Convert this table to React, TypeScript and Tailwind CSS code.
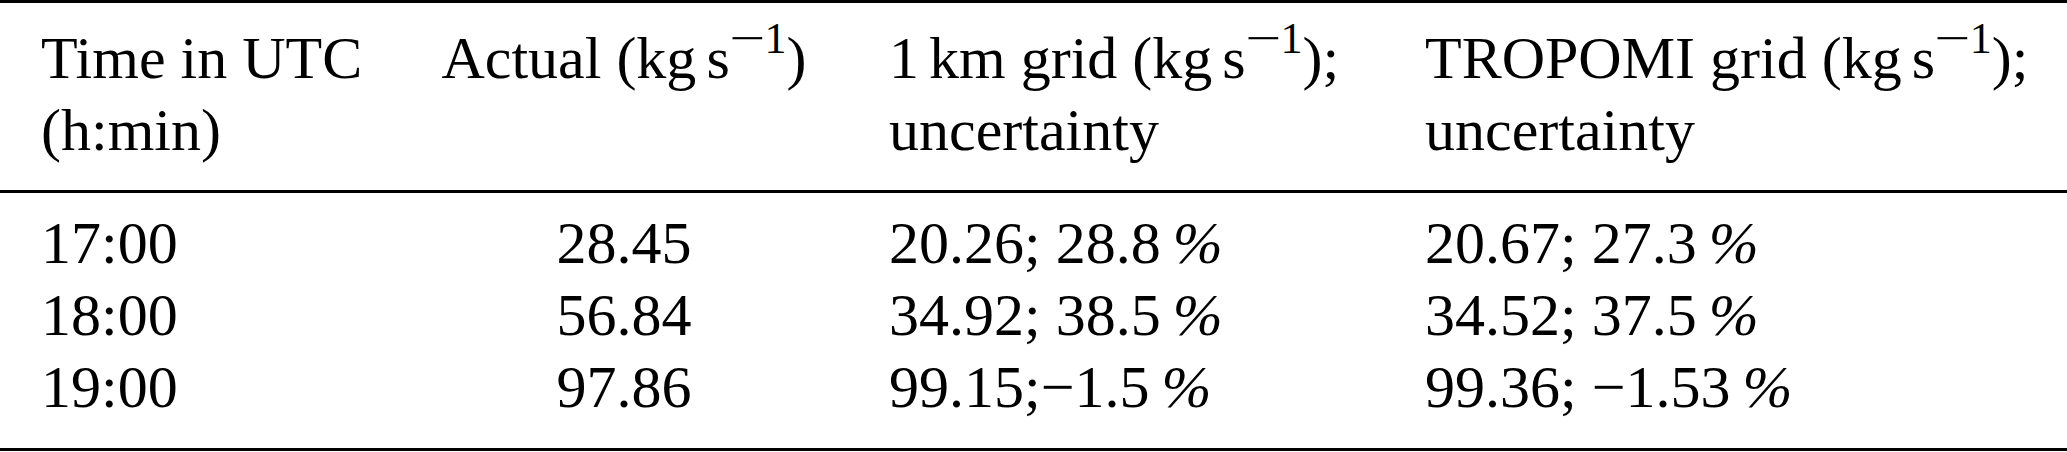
const rows = [
  { time: "17:00", actual: "28.45", km: "20.26; 28.8", tropomi: "20.67; 27.3" },
  { time: "18:00", actual: "56.84", km: "34.92; 38.5", tropomi: "34.52; 37.5" },
  { time: "19:00", actual: "97.86", km: "99.15;\u22121.5", tropomi: "99.36; \u22121.53" },
];

const cols = "grid grid-cols-[400px_448px_536px_1fr]";

function Unit() {
  // (kg s^-1) with a raised, smaller exponent
  return (
    <>
      (kg<span className="ml-[10px]">s</span>
      <span className="text-[44px] leading-[0] align-[25px]">
        <span className="inline-block scale-x-[1.45] mx-[5px]">{"\u2212"}</span>1
      </span>
      )
    </>
  );
}

function Percent({ value }: { value: string }) {
  return (
    <>
      {value}
      <span className="ml-[12px] italic">%</span>
    </>
  );
}

export default function App() {
  return (
    <div className="w-[2067px] h-[452px] bg-white text-black font-[Liberation_Serif,serif] text-[60px] leading-[72px] whitespace-nowrap">
      {/* Header */}
      <div className={`${cols} border-t-[3px] border-b-[3px] border-black pt-[19px] pb-[24px]`}>
        <div className="px-[41px]">
          <div>Time in UTC</div>
          <div>(h:min)</div>
        </div>
        <div className="px-[41px] text-center">
          <div>
            Actual <Unit />
          </div>
        </div>
        <div className="px-[41px]">
          <div>
            1<span className="ml-[10px]">km</span> grid <Unit />;
          </div>
          <div>uncertainty</div>
        </div>
        <div className="px-[41px]">
          <div>
            TROPOMI grid <Unit />;
          </div>
          <div>uncertainty</div>
        </div>
      </div>

      {/* Body */}
      <div className="border-b-[3px] border-black pt-[14px] pb-[25px]">
        {rows.map((r) => (
          <div key={r.time} className={cols}>
            <div className="px-[41px]">{r.time}</div>
            <div className="px-[41px] text-center">{r.actual}</div>
            <div className="px-[41px]">
              <Percent value={r.km} />
            </div>
            <div className="px-[41px]">
              <Percent value={r.tropomi} />
            </div>
          </div>
        ))}
      </div>
    </div>
  );
}
